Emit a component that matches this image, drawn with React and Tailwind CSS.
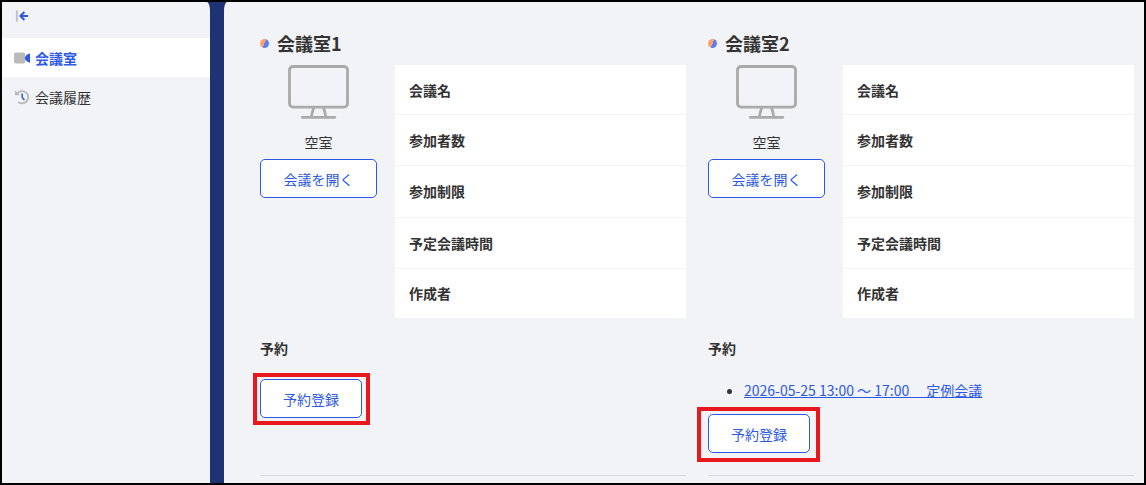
import React from "react";

const details = ["会議名", "参加者数", "参加制限", "予定会議時間", "作成者"];

const rooms = [
    {
        id: 1,
        name: "会議室1",
        reservations: [],
        frame: "-left-[7px] -right-[8px] -top-[6px] -bottom-[7px]",
    },
    {
        id: 2,
        name: "会議室2",
        reservations: ["2026-05-25 13:00 ～ 17:00　 定例会議"],
        frame: "-left-[11px] -right-[10px] -top-[7px] -bottom-[9px]",
    },
];

function CollapseIcon() {
    return (
        <svg width="16" height="14" viewBox="0 0 16 14" fill="none">
            <path d="M2.8 1.5V12.5" stroke="#bdbdbd" strokeWidth="1.8" />
            <path
                d="M14 7H6.8M10.4 3L6.4 7L10.4 11"
                stroke="#2b59e6"
                strokeWidth="2"
            />
        </svg>
    );
}

function CameraIcon() {
    return (
        <svg width="16" height="12" viewBox="0 0 16 12">
            <rect x="0" y="0.5" width="11.2" height="11" rx="1.8" fill="#bababa" />
            <path
                d="M16.2 1.4V10.8C13.4 10.4 11.2 8.6 10.8 6.1C11.2 3.6 13.4 1.8 16.2 1.4Z"
                fill="#2b59e6"
            />
        </svg>
    );
}

function HistoryIcon() {
    return (
        <svg width="16" height="16" viewBox="0 0 16 16" fill="none">
            <path
                d="M3.4 4.4A6.1 6.1 0 1 1 4.2 12.9"
                stroke="#bababa"
                strokeWidth="1.9"
            />
            <path d="M1 1.2V6.2H6Z" fill="#bababa" />
            <path d="M8.2 4.4V8.4L10.4 11" stroke="#2b59e6" strokeWidth="1.5" />
        </svg>
    );
}

function MonitorIcon() {
    return (
        <svg
            width="61"
            height="55"
            viewBox="0 0 61 55"
            fill="none"
            stroke="#aaaaaa"
            strokeWidth="2.8"
        >
            <rect x="1.5" y="1.5" width="58" height="40.6" rx="3.6" />
            <path d="M25.6 42.5L23.2 52M35.6 42.5L38 52" />
            <path d="M14.4 52.4H46.8" strokeLinecap="round" />
        </svg>
    );
}

function OutlineButton({ children, className = "" }) {
    return (
        <button
            type="button"
            className={`h-[39px] rounded-[5px] border border-[#2b59e6] bg-white leading-5 text-[#2b59e6] ${className}`}
        >
            {children}
        </button>
    );
}

function Sidebar() {
    return (
        <aside className="w-52 shrink-0 rounded-tr-[3px_9px] bg-[#f2f3f7]">
            <div className="flex h-9 items-start px-3 pt-[7px]">
                <button type="button" aria-label="メニューを閉じる">
                    <CollapseIcon />
                </button>
            </div>
            <nav>
                <a
                    href="#rooms"
                    className="flex h-[39px] items-center gap-[5px] bg-white px-3 font-bold text-[#2b59e6]"
                >
                    <CameraIcon />
                    会議室
                </a>
                <a
                    href="#history"
                    className="flex h-[39px] items-center gap-[5px] px-3"
                >
                    <HistoryIcon />
                    会議履歴
                </a>
            </nav>
        </aside>
    );
}

function RoomCard({ room }) {
    return (
        <section className="flex flex-col border-b border-[#d8d9de]">
            <h2 className="mb-[11px] flex items-center gap-2 text-lg leading-[22px] font-bold">
                <span className="size-[9px] rounded-full bg-[linear-gradient(115deg,#ffa06e_50%,#5a7ff0_50%)]" />
                {room.name}
            </h2>

            <div className="flex gap-[18px]">
                <div className="flex w-[117px] shrink-0 flex-col items-center">
                    <MonitorIcon />
                    <p className="mt-3 mb-[7px] leading-5">空室</p>
                    <OutlineButton className="w-full">会議を開く</OutlineButton>
                </div>
                <table className="h-[253px] flex-1 bg-white text-left">
                    <tbody>
                        {details.map((label) => (
                            <tr
                                key={label}
                                className="border-b border-[#f2f3f5] last:border-b-0"
                            >
                                <th scope="row" className="px-[14px] font-bold">
                                    {label}
                                </th>
                                <td></td>
                            </tr>
                        ))}
                    </tbody>
                </table>
            </div>

            <h3 className="mt-5 leading-5 font-bold">予約</h3>
            {room.reservations.length > 0 ? (
                <ul className="mt-[22px] mb-[14px] list-disc pl-9 leading-5">
                    {room.reservations.map((reservation) => (
                        <li key={reservation}>
                            <a
                                href="#reservation"
                                className="text-[#2b59e6] underline"
                            >
                                {reservation}
                            </a>
                        </li>
                    ))}
                </ul>
            ) : (
                <div className="h-[21px]" />
            )}
            <div className="relative mb-[22px] w-fit">
                <OutlineButton className="px-[22px]">予約登録</OutlineButton>
                <span
                    className={`pointer-events-none absolute border-4 border-[#e8181c] ${room.frame}`}
                />
            </div>
        </section>
    );
}

export default function App() {
    return (
        <div className="flex min-h-screen gap-[14px] border-2 border-black bg-[#1e3373] font-['Noto_Sans_CJK_JP',sans-serif] text-sm text-[#333333]">
            <Sidebar />
            <main className="flex-1 rounded-tl-[3px_9px] bg-[#f2f3f7] pt-[30px] pr-[10px] pb-[7px] pl-9">
                <div className="grid grid-cols-2 gap-[22px]">
                    {rooms.map((room) => (
                        <RoomCard key={room.id} room={room} />
                    ))}
                </div>
            </main>
        </div>
    );
}
